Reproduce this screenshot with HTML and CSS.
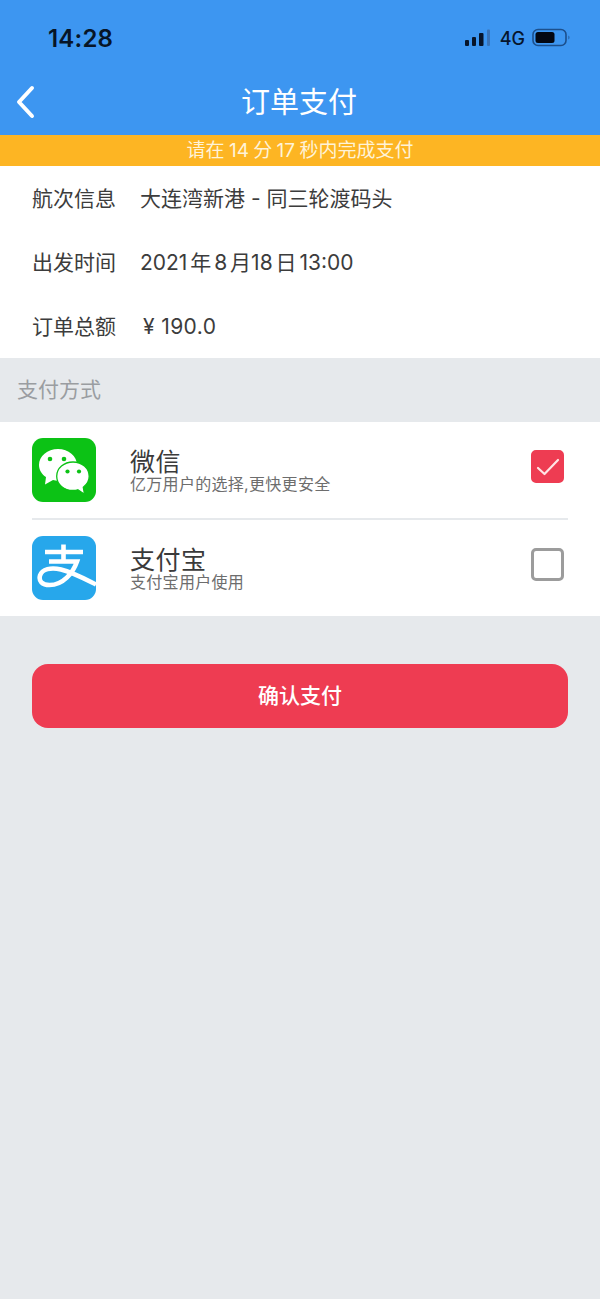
FILE: index.html
```html
<!DOCTYPE html>
<html lang="zh-CN">
<head>
<meta charset="utf-8">
<title>订单支付</title>
<link rel="stylesheet" href="styles.css">
</head>
<body>
<div class="page">
  <header class="header">
    <div class="status">
      <span class="time">14:28</span>
      <div class="status-right">
        <svg class="signal" width="26" height="18" viewBox="0 0 26 18"><rect x="0" y="11" width="4" height="6" rx="1" fill="#07152b"/><rect x="7" y="8" width="4" height="9" rx="1" fill="#07152b"/><rect x="14" y="4" width="4.500" height="13" rx="1" fill="#07152b"/><rect x="22" y="0.500" width="3" height="16.500" rx="1" fill="#3a74b8"/></svg>
        <span class="net">4G</span>
        <svg class="battery" width="40" height="20" viewBox="0 0 40 20"><rect x="1" y="1.500" width="33" height="16" rx="5" fill="none" stroke="#1c4f8c" stroke-width="1.600"/><rect x="3.500" y="4" width="19" height="11" rx="2.500" fill="#030712"/><path d="M36.500 7.500c1.200.5 1.200 3.500 0 4z" fill="#1c4f8c"/></svg>
      </div>
    </div>
    <div class="nav">
      <svg class="back" width="20" height="34" viewBox="0 0 20 34"><path d="M16 3 3 17 16 31" fill="none" stroke="#fff" stroke-width="4" stroke-linecap="round" stroke-linejoin="round"/></svg>
      <h1 class="title">订单支付</h1>
    </div>
  </header>
  <div class="notice">请在 14 分 17 秒内完成支付</div>
  <section class="info">
    <div class="info-row"><span class="info-label">航次信息</span><span class="info-value">大连湾新港 - 同三轮渡码头</span></div>
    <div class="info-row"><span class="info-label">出发时间</span><span class="info-value date">2021 年 8 月18 日 13:00</span></div>
    <div class="info-row"><span class="info-label">订单总额</span><span class="info-value price">¥ 190.0</span></div>
  </section>
  <div class="section-title">支付方式</div>
  <section class="methods">
    <div class="method">
      <svg class="logo" width="64" height="64" viewBox="0 0 64 64">
        <rect width="64" height="64" rx="11" fill="#0cc215"/>
        <path d="M26 11C15.500 11 7 18.200 7 27c0 5 2.700 9.200 7 12l-1 7.500 8-4.500c1.700.5 3.300.7 5 .7 10.500 0 19-7 19-15.700S36.500 11 26 11z" fill="#fff"/>
        <path d="M41 24c-9 0-16.300 6.200-16.300 14.300S32 52.500 41 52.500c1.700 0 3.300-.2 4.800-.7l6.700 4.400-1.200-7c3.500-2.500 5.900-6.300 5.900-10.900C57.200 30.200 50 24 41 24z" fill="#fff" stroke="#0cc215" stroke-width="1.300"/>
        <circle cx="18" cy="21" r="2.300" fill="#0cc215"/><circle cx="32" cy="21" r="2.300" fill="#0cc215"/>
        <circle cx="35.500" cy="33.500" r="2.100" fill="#0cc215"/><circle cx="47" cy="33.500" r="2.100" fill="#0cc215"/>
      </svg>
      <div class="method-text">
        <div class="method-name">微信</div>
        <div class="method-desc">亿万用户的选择,更快更安全</div>
      </div>
      <span class="check is-on"><svg width="26" height="22" viewBox="0 0 26 22"><path d="M3 12 9.500 18 23 4" fill="none" stroke="#ffe4e4" stroke-width="2.200" stroke-linecap="round" stroke-linejoin="round"/></svg></span>
    </div>
    <div class="divider"></div>
    <div class="method">
      <svg class="logo" width="64" height="64" viewBox="0 0 64 64">
        <rect width="64" height="64" rx="11" fill="#27a7eb"/>
        <path d="M13 16H51M31.500 8.500V25M17 25.500H45C41 37 31 49 17.500 49 10 49 6.500 45 8 39.500 10 33 19 31 29 33.500 41 36.500 52 42.500 64 48.500" fill="none" stroke="#fff" stroke-width="4.600"/>
      </svg>
      <div class="method-text">
        <div class="method-name">支付宝</div>
        <div class="method-desc">支付宝用户使用</div>
      </div>
      <span class="check check-off"></span>
    </div>
  </section>
  <div class="action"><button class="pay" type="button">确认支付</button></div>
</div>
</body>
</html>
```

FILE: styles.css
```css
* { box-sizing: border-box; }
html, body { margin: 0; padding: 0; }
body {
  width: 600px;
  height: 1299px;
  overflow: hidden;
  background: #e6e9ec;
  font-family: "Inter", "Noto Sans CJK SC", sans-serif;
  color: #3c3c3c;
}
.page { display: flex; flex-direction: column; height: 1299px; }
.header { height: 135px; background: #3d96f1; display: flex; flex-direction: column; }
.status {
  height: 76px;
  padding: 0 28px 0 48px;
  display: flex;
  align-items: center;
  justify-content: space-between;
}
.time { font-size: 24px; font-weight: 600; color: #071527; letter-spacing: .2px; }
.status-right { display: flex; align-items: center; }
.net { font-size: 18px; font-weight: 500; color: #07152b; margin: 0 7px 0 9px; }
.signal, .battery { display: block; }
.nav {
  height: 59px;
  display: flex;
  align-items: center;
  justify-content: center;
  padding: 0 2px 4px 0;
  position: relative;
}
.back { position: absolute; left: 16px; top: 9px; }
.title { margin: 0; font-size: 29px; font-weight: 400; line-height: 1.2; color: #fff; }
.notice {
  height: 31px;
  background: #fdb523;
  color: #fff3d8;
  font-size: 19px;
  line-height: 31px;
  text-align: center;
  word-spacing: -1px;
}
.info { background: #fff; }
.info-row { height: 64px; padding: 0 0 3px 32px; display: flex; align-items: center; font-size: 21px; }
.info-label { width: 108px; flex: none; }
.date { word-spacing: -3px; }
.price { margin-top: 4px; padding-left: 3px; letter-spacing: .4px; }
.section-title { height: 64px; padding: 0 0 5px 17px; display: flex; align-items: center; font-size: 21px; color: #9a9da1; }
.methods { background: #fff; height: 194px; }
.method { height: 96px; padding: 0 36px 0 32px; display: flex; align-items: center; }
.logo { flex: none; display: block; }
.method-text { margin-left: 34px; flex: 1; padding-top: 2px; }
.method-name { font-size: 25px; line-height: 26px; letter-spacing: .5px; color: #3a3a3a; }
.method-desc { font-size: 16px; line-height: 19px; letter-spacing: .3px; color: #6d6d6d; }
.divider { height: 2px; margin: 0 32px; background: #e6e9ec; }
.check {
  width: 33px;
  height: 33px;
  flex: none;
  margin-bottom: 7px;
  border: 3px solid #9c9c9c;
  border-radius: 5px;
  display: flex;
  align-items: center;
  justify-content: center;
}
.check-off { margin-bottom: 8px; }
.check.is-on { background: #ee3c52; border-color: #ee3c52; }
.check svg { display: block; }
.action { padding: 48px 32px 0; }
.pay {
  display: block;
  width: 100%;
  height: 64px;
  padding: 0 0 5px;
  border: 0;
  border-radius: 16px;
  background: #ee3c52;
  color: #fff;
  font-family: inherit;
  font-size: 21px;
  font-weight: 500;
}
```
